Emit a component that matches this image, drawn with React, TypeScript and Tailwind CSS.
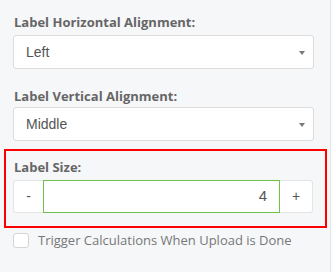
import React from "react";

function Arrow() {
  return (
    <svg width="6" height="4" viewBox="0 0 6 4" className="absolute right-[8px] top-[15px]">
      <path d="M0 0 L6 0 L3 4 Z" fill="#777" />
    </svg>
  );
}

function Select({ value }: { value: string }) {
  return (
    <div className="relative ml-[13px] w-[301px] h-[34px] bg-white border border-[#dcdcdc] rounded-[3px] flex items-center pl-[12px] text-[14px] text-[#555] [font-family:'Liberation_Sans',Arial,sans-serif]">
      {value}
      <Arrow />
    </div>
  );
}

export default function App() {
  return (
    <div className="w-[333px] h-[272px] bg-[#f6f7f9] flex overflow-hidden [font-family:'Open_Sans',sans-serif]">
      <div className="w-[330px] flex flex-col">
        <div className="h-[14px]" />
        <div className="ml-[14px] text-[13px] font-bold text-[#666] leading-[16px]">Label Horizontal Alignment:</div>
        <div className="h-[5px]" />
        <Select value="Left" />
        <div className="h-[19px]" />
        <div className="ml-[14px] text-[13px] font-bold text-[#666] leading-[16px]">Label Vertical Alignment:</div>
        <div className="h-[3px]" />
        <Select value="Middle" />
        <div className="h-[8px]" />
        <div className="ml-[4px] w-[323px] h-[79px] border-2 border-[#ff0000] flex flex-col">
          <div className="h-[8px]" />
          <div className="ml-[8px] text-[13px] font-bold text-[#666] leading-[16px]">Label Size:</div>
          <div className="h-[5px]" />
          <div className="ml-[7px] w-[300px] h-[33px] flex [font-family:'Liberation_Sans',Arial,sans-serif] text-[14px] text-[#555]">
            <div className="w-[30px] bg-white border border-r-0 border-[#e4e4e4] rounded-l-[3px] flex items-center justify-center">-</div>
            <div className="flex-1 bg-white border border-[#6cc24a] flex items-center justify-end pr-[12px] text-[15px]">4</div>
            <div className="w-[33px] bg-white border border-l-0 border-[#e4e4e4] rounded-r-[3px] flex items-center justify-center">+</div>
          </div>
        </div>
        <div className="h-[4px]" />
        <div className="flex items-center ml-[13px]">
          <div className="w-[16px] h-[15px] bg-white border border-[#d4d4d4] rounded-[3px]" />
          <div className="ml-[9px] text-[13px] text-[#777] leading-[16px]">Trigger Calculations When Upload is Done</div>
        </div>
      </div>
      <div className="w-[1px] bg-[#e6e6e6]" />
      <div className="flex-1 bg-[#fbfbfb]" />
    </div>
  );
}
